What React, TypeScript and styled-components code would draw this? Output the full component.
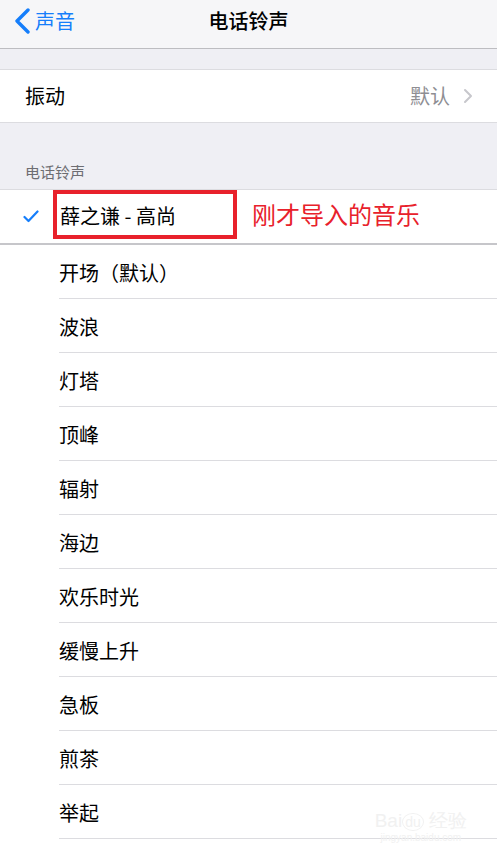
import styled, { createGlobalStyle } from 'styled-components'

const GlobalStyle = createGlobalStyle`
  html, body {
    margin: 0;
    padding: 0;
    background: #efeff4;
  }
  body {
    font-family: "Noto Sans CJK SC", "Noto Sans", "Liberation Sans", sans-serif;
    color: #000;
  }
`

const tones = [
  '开场（默认）',
  '波浪',
  '灯塔',
  '顶峰',
  '辐射',
  '海边',
  '欢乐时光',
  '缓慢上升',
  '急板',
  '煎茶',
  '举起',
  '',
]

export default function App() {
  return (
    <Page>
      <GlobalStyle />
      <NavBar>
        <BackBtn>
          <svg width="17" height="26" viewBox="0 0 17 26">
            <path d="M14 2 L3 13 L14 24" fill="none" stroke="#157efb" strokeWidth="3.4" strokeLinecap="round" strokeLinejoin="round" />
          </svg>
          <span>声音</span>
        </BackBtn>
        <Title>电话铃声</Title>
      </NavBar>

      <Group>
        <Row>
          <Label>振动</Label>
          <Detail>
            默认
            <svg width="10" height="16" viewBox="0 0 10 16">
              <path d="M2 2 L8 8 L2 14" fill="none" stroke="#c7c7cc" strokeWidth="2" strokeLinecap="round" strokeLinejoin="round" />
            </svg>
          </Detail>
        </Row>
      </Group>

      <SectionHeader>电话铃声</SectionHeader>

      <List>
        <SelectedRow>
          <Check>
            <svg width="16" height="13" viewBox="0 0 16 13">
              <path d="M1.5 7 L5.5 11 L14.5 1.5" fill="none" stroke="#157efb" strokeWidth="2.2" strokeLinecap="round" strokeLinejoin="round" />
            </svg>
          </Check>
          <MarkBox>薛之谦 - 高尚</MarkBox>
          <Note>刚才导入的音乐</Note>
        </SelectedRow>
        {tones.map((t, i) => (
          <ToneRow key={i}>
            <ToneText>{t}</ToneText>
          </ToneRow>
        ))}
      </List>

      <Watermark>
        <div>Bai<b>du</b> 经验</div>
        <small>jingyan.baidu.com</small>
      </Watermark>
    </Page>
  )
}

const Page = styled.div`
  position: relative;
  width: 497px;
  height: 855px;
  overflow: hidden;
  background: #efeff4;
`

const NavBar = styled.div`
  height: 48px;
  background: #f6f6f8;
  border-bottom: 1px solid #bdbdc1;
  display: flex;
  align-items: center;
  justify-content: center;
  position: relative;
`

const BackBtn = styled.div`
  position: absolute;
  left: 14px;
  top: 8px;
  display: flex;
  align-items: center;
  gap: 4px;
  color: #157efb;
  font-size: 20px;
  line-height: 26px;
`

const Title = styled.div`
  font-size: 20px;
  font-weight: 500;
  line-height: 26px;
  margin-top: -6px;
`

const Group = styled.div`
  margin-top: 20px;
  background: #fff;
  border-top: 1px solid #dcdce0;
  border-bottom: 1px solid #dcdce0;
`

const Row = styled.div`
  height: 52px;
  display: flex;
  align-items: center;
  justify-content: space-between;
  padding: 0 24px 0 25px;
`

const Label = styled.span`
  font-size: 20px;
  line-height: 26px;
`

const Detail = styled.span`
  display: flex;
  align-items: center;
  gap: 13px;
  font-size: 20px;
  line-height: 26px;
  color: #8e8e93;
`

const SectionHeader = styled.div`
  height: 67px;
  box-sizing: border-box;
  padding: 39px 25px 0;
  font-size: 15px;
  line-height: 20px;
  color: #6d6d72;
  border-bottom: 1px solid #dcdce0;
`

const List = styled.div`
  background: #fff;
`

const SelectedRow = styled.div`
  height: 53px;
  display: flex;
  align-items: flex-start;
  border-bottom: 2px solid #c6c6ca;
`

const Check = styled.span`
  width: 53px;
  padding: 20px 0 0 23px;
  box-sizing: border-box;
  display: flex;
`

const MarkBox = styled.span`
  box-sizing: border-box;
  width: 184px;
  height: 49px;
  border: 4px solid #e8212b;
  padding-left: 3px;
  font-size: 20px;
  line-height: 43px;
`

const Note = styled.span`
  margin: 9px 0 0 15px;
  font-size: 24px;
  line-height: 30px;
  color: #e8212b;
`

const ToneRow = styled.div`
  height: 54px;
  padding-left: 59px;
  box-sizing: border-box;
`

const ToneText = styled.div`
  height: 53px;
  border-bottom: 1px solid #dcdce0;
  font-size: 20px;
  line-height: 55px;
`

const Watermark = styled.div`
  position: absolute;
  right: 30px;
  bottom: 12px;
  color: #f1f1f1;
  text-align: center;
  font-family: "Liberation Sans", sans-serif;
  div {
    font-size: 19px;
    line-height: 20px;
  }
  b {
    font-weight: 400;
    border: 1.5px solid #f1f1f1;
    border-radius: 50%;
    padding: 0 2px;
    font-size: 14px;
  }
  small {
    font-size: 10px;
    display: block;
  }
`
